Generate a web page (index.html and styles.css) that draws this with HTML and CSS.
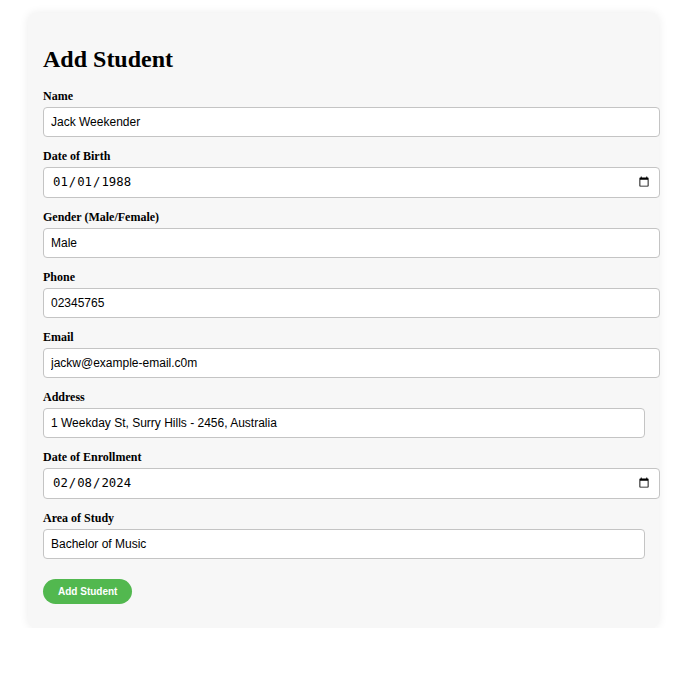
FILE: index.html
```html
<!DOCTYPE html>
<html lang="en">
<head>
<meta charset="utf-8">
<title>Add Student</title>
<link rel="stylesheet" href="styles.css">
</head>
<body>
<div class="card">
  <h2 class="title">Add Student</h2>
  <form class="form">
    <label class="label" for="name">Name</label>
    <input class="field" id="name" type="text" value="Jack Weekender">

    <label class="label" for="dob">Date of Birth</label>
    <input class="field date" id="dob" type="date" value="1988-01-01">

    <label class="label" for="gender">Gender (Male/Female)</label>
    <input class="field" id="gender" type="text" value="Male">

    <label class="label" for="phone">Phone</label>
    <input class="field" id="phone" type="text" value="02345765">

    <label class="label" for="email">Email</label>
    <input class="field" id="email" type="text" value="jackw@example-email.c0m">

    <label class="label" for="address">Address</label>
    <input class="field narrow" id="address" type="text" value="1 Weekday St, Surry Hills - 2456, Australia">

    <label class="label" for="enrol">Date of Enrollment</label>
    <input class="field date" id="enrol" type="date" value="2024-02-08">

    <label class="label" for="study">Area of Study</label>
    <input class="field narrow" id="study" type="text" value="Bachelor of Music">

    <button class="btn" type="button">Add Student</button>
  </form>
</div>
</body>
</html>
```

FILE: styles.css
```css
html, body {
  margin: 0;
  padding: 0;
  background: #ffffff;
}

body {
  font-family: "Liberation Serif", "Times New Roman", serif;
  color: #000;
}

.card {
  width: 601px;
  margin: 13px 0 0 28px;
  padding: 15px 15px 15px 15px;
  background: #f7f7f7;
  border-radius: 8px;
  box-shadow: 0 0 10px rgba(0, 0, 0, 0.08);
}

.title {
  margin: 17px 0 16px;
  font-size: 24px;
  line-height: 28px;
  font-weight: bold;
}

.form {
  display: flex;
  flex-direction: column;
  align-items: flex-start;
}

.label {
  display: block;
  font-size: 12px;
  line-height: 14px;
  font-weight: bold;
  margin-bottom: 4px;
}

.field {
  box-sizing: border-box;
  width: 617px;
  height: 30px;
  margin: 0 0 12px;
  padding: 7px;
  border: 1px solid #c4c4c4;
  border-radius: 4px;
  background: #fff;
  font-family: "Liberation Sans", Arial, sans-serif;
  font-size: 12px;
  line-height: 14px;
  color: #000;
}

.field.narrow {
  width: 602px;
}

.field.date {
  height: 31px;
  padding: 6px 7px 6px 8px;
  font-family: "DejaVu Sans Mono", "Liberation Mono", monospace;
  font-size: 12.3px;
}

.btn {
  margin: 8px 0 9px;
  height: 25px;
  padding: 0 15px;
  border: none;
  border-radius: 13px;
  background: #52b84f;
  color: #fff;
  font-family: "Liberation Sans", Arial, sans-serif;
  font-size: 10px;
  font-weight: bold;
  cursor: pointer;
}
```
